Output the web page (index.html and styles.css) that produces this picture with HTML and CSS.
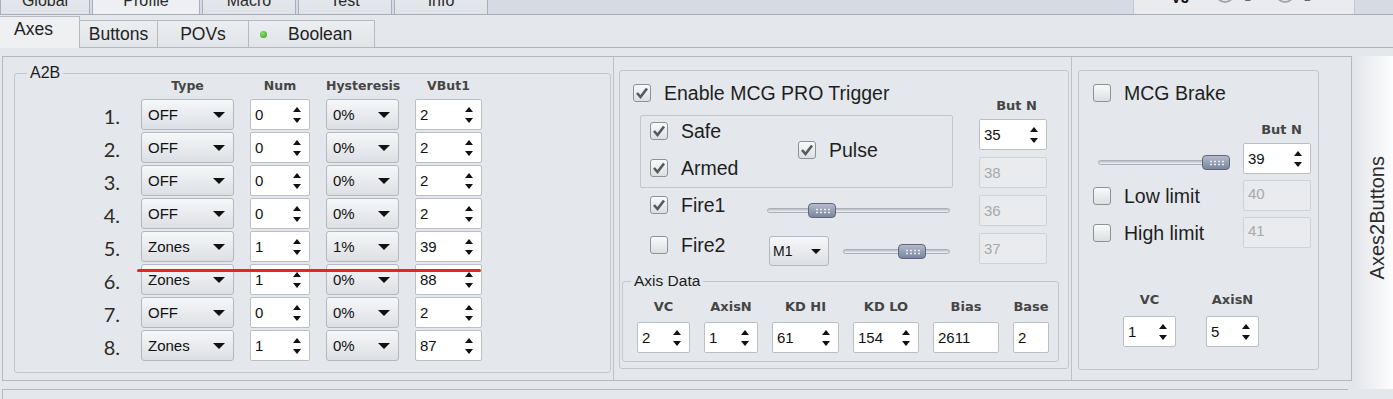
FILE: index.html
```html
<!DOCTYPE html>
<html>
    <head>
        <title>Profile - Axes</title>
        <link rel="stylesheet" href="styles.css">
    </head>
    <body>
        <div class="top-tabs">
            <div class="top-tab">Global</div>
            <div class="top-tab top-tab-active">Profile</div>
            <div class="top-tab">Macro</div>
            <div class="top-tab">Test</div>
            <div class="top-tab">Info</div>
            <div class="top-tools">
                <span class="tool-vj">VJ</span>
                <span class="tool-radio"></span><span class="tool-num">1</span>
                <span class="tool-radio"></span><span class="tool-num">2</span>
            </div>
        </div>

        <div class="sub-tabs">
            <div class="sub-tab sub-tab-active">Axes</div>
            <div class="sub-tab tab-buttons">Buttons</div>
            <div class="sub-tab tab-povs">POVs</div>
            <div class="sub-tab tab-boolean"><span class="led"></span>Boolean</div>
            <div class="sub-tabs-fill"></div>
        </div>

        <div class="workspace">
            <div class="work-main">
                <div class="content">

                    <div class="left-section">
                        <fieldset class="a2b">
                            <legend>A2B</legend>
                            <div class="a2b-grid">
                                <span></span>
                                <span class="head">Type</span>
                                <span class="head">Num</span>
                                <span class="head">Hysteresis</span>
                                <span class="head">VBut1</span>

                                <span class="row-num">1.</span>
                                <div class="combo">OFF</div>
                                <div class="spin">0<i class="ud"></i></div>
                                <div class="combo">0%</div>
                                <div class="spin">2<i class="ud"></i></div>

                                <span class="row-num">2.</span>
                                <div class="combo">OFF</div>
                                <div class="spin">0<i class="ud"></i></div>
                                <div class="combo">0%</div>
                                <div class="spin">2<i class="ud"></i></div>

                                <span class="row-num">3.</span>
                                <div class="combo">OFF</div>
                                <div class="spin">0<i class="ud"></i></div>
                                <div class="combo">0%</div>
                                <div class="spin">2<i class="ud"></i></div>

                                <span class="row-num">4.</span>
                                <div class="combo">OFF</div>
                                <div class="spin">0<i class="ud"></i></div>
                                <div class="combo">0%</div>
                                <div class="spin">2<i class="ud"></i></div>

                                <span class="row-num">5.</span>
                                <div class="combo">Zones</div>
                                <div class="spin">1<i class="ud"></i></div>
                                <div class="combo">1%</div>
                                <div class="spin">39<i class="ud"></i></div>

                                <span class="row-num">6.</span>
                                <div class="combo">Zones</div>
                                <div class="spin">1<i class="ud"></i></div>
                                <div class="combo">0%</div>
                                <div class="spin">88<i class="ud"></i></div>

                                <span class="row-num">7.</span>
                                <div class="combo">OFF</div>
                                <div class="spin">0<i class="ud"></i></div>
                                <div class="combo">0%</div>
                                <div class="spin">2<i class="ud"></i></div>

                                <span class="row-num">8.</span>
                                <div class="combo">Zones</div>
                                <div class="spin">1<i class="ud"></i></div>
                                <div class="combo">0%</div>
                                <div class="spin">87<i class="ud"></i></div>

                                <div class="red-mark"></div>
                            </div>
                        </fieldset>
                    </div>

                    <div class="mid-section">
                        <div class="trigger">
                            <div class="trig-top">
                                <div class="trig-left">
                                    <div class="check-row">
                                        <span class="box"><svg viewBox="0 0 16 16"><path d="M3 8 L6.5 12 L13 3.5"/></svg></span>
                                        Enable MCG PRO Trigger
                                    </div>

                                    <div class="inner-box">
                                        <div class="inner-left">
                                            <div class="check-row">
                                                <span class="box"><svg viewBox="0 0 16 16"><path d="M3 8 L6.5 12 L13 3.5"/></svg></span>
                                                Safe
                                            </div>
                                            <div class="check-row">
                                                <span class="box"><svg viewBox="0 0 16 16"><path d="M3 8 L6.5 12 L13 3.5"/></svg></span>
                                                Armed
                                            </div>
                                        </div>
                                        <div class="check-row pulse">
                                            <span class="box"><svg viewBox="0 0 16 16"><path d="M3 8 L6.5 12 L13 3.5"/></svg></span>
                                            Pulse
                                        </div>
                                    </div>

                                    <div class="fire-row">
                                        <div class="check-row fire-label">
                                            <span class="box"><svg viewBox="0 0 16 16"><path d="M3 8 L6.5 12 L13 3.5"/></svg></span>
                                            Fire1
                                        </div>
                                        <div class="slider fire1-slider">
                                            <div class="track"></div>
                                            <div class="thumb" style="left: 41px;"></div>
                                        </div>
                                    </div>

                                    <div class="fire-row fire2-row">
                                        <div class="check-row fire-label fire2-label">
                                            <span class="box"></span>
                                            Fire2
                                        </div>
                                        <div class="combo combo-small">M1</div>
                                        <div class="slider fire2-slider">
                                            <div class="track"></div>
                                            <div class="thumb" style="left: 55px;"></div>
                                        </div>
                                    </div>
                                </div>

                                <div class="trig-right">
                                    <span class="head but-head">But N</span>
                                    <div class="spin">35<i class="ud"></i></div>
                                    <div class="field off">38</div>
                                    <div class="field off">36</div>
                                    <div class="field off">37</div>
                                </div>
                            </div>

                            <fieldset class="axis-data">
                                <legend>Axis Data</legend>
                                <div class="axis-cols">
                                    <div class="axis-col">
                                        <span class="head">VC</span>
                                        <div class="spin w-vc">2<i class="ud"></i></div>
                                    </div>
                                    <div class="axis-col">
                                        <span class="head">AxisN</span>
                                        <div class="spin w-axisn">1<i class="ud"></i></div>
                                    </div>
                                    <div class="axis-col">
                                        <span class="head">KD HI</span>
                                        <div class="spin w-kd">61<i class="ud"></i></div>
                                    </div>
                                    <div class="axis-col">
                                        <span class="head">KD LO</span>
                                        <div class="spin w-kd2">154<i class="ud"></i></div>
                                    </div>
                                    <div class="axis-col">
                                        <span class="head">Bias</span>
                                        <div class="field w-bias">2611</div>
                                    </div>
                                    <div class="axis-col">
                                        <span class="head">Base</span>
                                        <div class="field w-base">2</div>
                                    </div>
                                </div>
                            </fieldset>
                        </div>
                    </div>

                    <div class="right-section">
                        <div class="brake">
                            <div class="check-row">
                                <span class="box"></span>
                                MCG Brake
                            </div>

                            <div class="brake-grid">
                                <span></span>
                                <span class="head but-head">But N</span>

                                <div class="slider brake-slider">
                                    <div class="track"></div>
                                    <div class="thumb" style="left: 104px;"></div>
                                </div>
                                <div class="spin">39<i class="ud"></i></div>

                                <div class="check-row">
                                    <span class="box"></span>
                                    Low limit
                                </div>
                                <div class="field off field-top">40</div>

                                <div class="check-row">
                                    <span class="box"></span>
                                    High limit
                                </div>
                                <div class="field off field-top">41</div>
                            </div>

                            <div class="brake-axis">
                                <div class="axis-col">
                                    <span class="head">VC</span>
                                    <div class="spin w-vc">1<i class="ud"></i></div>
                                </div>
                                <div class="axis-col">
                                    <span class="head">AxisN</span>
                                    <div class="spin w-vc">5<i class="ud"></i></div>
                                </div>
                            </div>
                        </div>
                    </div>

                </div>
                <div class="bottom-strip"></div>
            </div>
            <div class="side-tab"><span>Axes2Buttons</span></div>
        </div>
    </body>
</html>
```

FILE: styles.css
```css
body {
    margin: 0;
    width: 1393px;
    height: 399px;
    overflow: hidden;
    background-color: #e4e8ec;
    color: #1c1c1c;
    font-family: "Liberation Sans", Arial, sans-serif;
}

/* main tab strip, cut off at the top of the shot */
.top-tabs {
    display: flex;
    align-items: flex-end;
    height: 14px;
    overflow: hidden;
    background-color: #d6dbe3;
    border-bottom: 1px solid #a7adb8;
}

.top-tab {
    flex: none;
    width: 94px;
    height: 32px;
    margin-right: 2px;
    box-sizing: border-box;
    padding-top: 4px;
    display: flex;
    align-items: center;
    justify-content: center;
    border: 1px solid #a9afba;
    border-bottom: none;
    background: linear-gradient(#e9ecf0, #dfe3e8);
    font-size: 16px;
    color: #2a2a2a;
}

.top-tab:first-child {
    width: 90px;
}

.top-tab-active {
    width: 108px;
    background: #edeff2;
}

.top-tools {
    flex: none;
    margin-left: auto;
    margin-right: 38px;
    width: 222px;
    height: 32px;
    box-sizing: border-box;
    padding: 8px 0 0 37px;
    display: flex;
    align-items: flex-start;
    background-color: #e9ebee;
    border-left: 1px solid #c2c6cd;
    border-right: 1px solid #c2c6cd;
}

.tool-vj {
    font-size: 15px;
    font-weight: bold;
    line-height: 16px;
    color: #111;
    margin-right: 26px;
}

.tool-radio {
    width: 20px;
    height: 20px;
    margin-top: -7px;
    box-sizing: border-box;
    border: 2px solid #a2a6ad;
    border-radius: 50%;
}

.tool-num {
    font-size: 12px;
    line-height: 14px;
    color: #666;
    margin: 0 24px 0 9px;
}

/* second tab row */
.sub-tabs {
    display: flex;
    align-items: flex-end;
    height: 33px;
    background-color: #e4e7eb;
}

.sub-tab {
    flex: none;
    height: 28px;
    box-sizing: border-box;
    margin-left: -1px;
    display: flex;
    align-items: center;
    justify-content: center;
    border: 1px solid #b5bac2;
    background: linear-gradient(#eceef1, #e1e4e8);
    font-size: 17.5px;
    color: #222;
}

.sub-tab-active {
    margin-left: 0;
    width: 80px;
    height: 32px;
    padding: 0 12px 7px 0;
    border-left: none;
    border-bottom: none;
    background: #eef0f2;
}

.tab-buttons {
    width: 79px;
}

.tab-povs {
    width: 92px;
}

.tab-boolean {
    width: 127px;
    justify-content: flex-start;
    padding-left: 11px;
}

.led {
    width: 7px;
    height: 7px;
    border-radius: 50%;
    margin-right: 21px;
    background: radial-gradient(circle at 40% 35%, #8fe06a, #2f9e1c);
}

.sub-tabs-fill {
    flex: 1;
    border-bottom: 1px solid #aeb3bb;
}

/* work area */
.workspace {
    display: flex;
    margin-top: 8px;
}

.work-main {
    margin-left: 2px;
    width: 1350px;
}

.content {
    display: flex;
    height: 325px;
    box-sizing: border-box;
    border: 1px solid #b4b9c1;
}

.bottom-strip {
    margin: 8px 4px 0 0;
    height: 20px;
    border-top: 1px solid #b4b9c1;
    border-left: 1px solid #b4b9c1;
}

.side-tab {
    width: 41px;
    height: 333px;
    box-sizing: border-box;
    padding: 0 0 10px 10px;
    display: flex;
    align-items: center;
    justify-content: center;
    background: linear-gradient(to right, #e2e5e9, #fdfdfe);
}

.side-tab span {
    writing-mode: vertical-rl;
    transform: rotate(180deg);
    font-size: 20px;
    color: #2c2c2c;
}

.head {
    font-family: "DejaVu Sans", Verdana, sans-serif;
    font-size: 13px;
    font-weight: bold;
    line-height: 14px;
    color: #454545;
    text-align: center;
}

.but-head {
    text-align: right;
    padding-right: 9px;
}

/* widgets */
.combo {
    display: flex;
    align-items: center;
    height: 31px;
    box-sizing: border-box;
    padding-left: 6px;
    border: 1px solid #b3b8c0;
    border-radius: 3px;
    background: linear-gradient(#f6f7f9, #dcdfe4);
    font-size: 15px;
    color: #111;
}

.combo::after {
    content: "";
    margin: 0 8px 0 auto;
    border-left: 6px solid transparent;
    border-right: 6px solid transparent;
    border-top: 6px solid #111;
}

.combo-small {
    width: 60px;
    height: 30px;
    padding-left: 3px;
    font-size: 14px;
}

.combo-small::after {
    margin-right: 7px;
    border-left-width: 5px;
    border-right-width: 5px;
    border-top-width: 5px;
}

.spin,
.field {
    display: flex;
    align-items: center;
    height: 31px;
    box-sizing: border-box;
    padding-left: 4px;
    background-color: #fff;
    border: 1px solid #babec5;
    border-radius: 2px;
    font-size: 15px;
    color: #111;
}

.field.off {
    background-color: #e9ebee;
    border-color: #cfd3d8;
    color: #a6a9ad;
}

.field-top {
    align-items: flex-start;
    padding-top: 4px;
}

.ud {
    display: flex;
    flex-direction: column;
    gap: 6px;
    margin: 0 8px 0 auto;
}

.ud::before {
    content: "";
    border-left: 4px solid transparent;
    border-right: 4px solid transparent;
    border-bottom: 5px solid #111;
}

.ud::after {
    content: "";
    border-left: 4px solid transparent;
    border-right: 4px solid transparent;
    border-top: 5px solid #111;
}

.check-row {
    display: flex;
    align-items: center;
    gap: 13px;
    height: 18px;
    font-size: 19.5px;
    line-height: 20px;
    color: #1e1e1e;
    white-space: nowrap;
}

.box {
    flex: none;
    width: 18px;
    height: 18px;
    box-sizing: border-box;
    border: 1px solid #8d929a;
    border-radius: 3px;
    background: linear-gradient(#f9fafb, #dcdfe3);
}

.box svg {
    display: block;
    width: 16px;
    height: 16px;
}

.box path {
    fill: none;
    stroke: #55595e;
    stroke-width: 2.6;
}

.slider {
    position: relative;
    height: 15px;
}

.track {
    margin-top: 5px;
    height: 5px;
    box-sizing: border-box;
    border: 1px solid #aab0b8;
    border-radius: 3px;
    background: linear-gradient(#b8bcc3, #f1f2f4);
}

.thumb {
    position: absolute;
    top: 0;
    width: 28px;
    height: 15px;
    box-sizing: border-box;
    border: 1px solid #5e677a;
    border-radius: 4px;
    background: linear-gradient(#b3bbcc, #7b869c);
}

.thumb::after {
    content: "";
    position: absolute;
    top: 4px;
    left: 6px;
    width: 15px;
    height: 6px;
    background-image: radial-gradient(circle, #eef1f7 0.8px, transparent 1.2px);
    background-size: 4px 3px;
}

/* A2B */
.left-section {
    flex: none;
    width: 611px;
    box-sizing: border-box;
    padding: 10px 0 0 11px;
    border-right: 1px solid #bcc1c8;
}

.a2b,
.axis-data {
    margin: 0;
    padding: 0;
    box-sizing: border-box;
    border: 1px solid #c3c7cd;
    border-radius: 3px;
}

.a2b {
    width: 597px;
    height: 306px;
}

.a2b legend {
    margin-left: 12px;
    padding: 0 3px;
    font-size: 16px;
    line-height: 12px;
}

.a2b-grid {
    position: relative;
    display: grid;
    grid-template-columns: 110px 93px 60px 73px 67px;
    grid-template-rows: 18px repeat(8, 31px);
    column-gap: 16px;
    row-gap: 2px;
}

.a2b-grid .head {
    font-size: 12.5px;
}

.row-num {
    padding: 3px 5px 0 0;
    text-align: right;
    font-family: Lato, "Open Sans", sans-serif;
    font-size: 20px;
    line-height: 28px;
    color: #2e2a25;
}

.red-mark {
    position: absolute;
    left: 122px;
    top: 190px;
    width: 344px;
    height: 3px;
    border-radius: 2px;
    background-color: #e0262b;
}

/* trigger */
.mid-section {
    flex: none;
    width: 457px;
    box-sizing: border-box;
    padding: 13px 0 0 5px;
}

.trigger {
    width: 450px;
    height: 299px;
    box-sizing: border-box;
    padding: 13px 0 0 0;
    border: 1px solid #c3c7cd;
    border-radius: 3px;
}

.trig-top {
    display: flex;
    padding-left: 13px;
}

.trig-left {
    width: 322px;
}

.inner-box {
    display: flex;
    margin: 13px 0 0 7px;
    width: 313px;
    height: 73px;
    box-sizing: border-box;
    padding-left: 9px;
    border: 1px solid #c3c7cd;
    border-radius: 2px;
}

.inner-left {
    display: flex;
    flex-direction: column;
    gap: 19px;
    width: 148px;
    padding-top: 6px;
}

.pulse {
    align-self: center;
    margin-bottom: 4px;
}

.fire-row {
    display: flex;
    align-items: flex-start;
    margin-top: 8px;
    padding-left: 17px;
}

.fire2-row {
    margin-top: 18px;
}

.fire-label {
    width: 117px;
}

.fire2-label {
    width: 119px;
}

.fire1-slider {
    width: 183px;
    margin-top: 7px;
}

.fire2-slider {
    width: 107px;
    margin: 8px 0 0 14px;
}

.trig-right {
    display: flex;
    flex-direction: column;
    gap: 7px;
    width: 68px;
    margin-left: 24px;
}

.trig-right .but-head {
    margin: 15px 0 -1px 0;
    padding-right: 10px;
}

.axis-data {
    width: 437px;
    height: 89px;
    margin: 7px 0 0 2px;
}

.axis-data legend {
    margin-left: 8px;
    padding: 0 3px;
    font-size: 15.5px;
    line-height: 16px;
}

.axis-cols {
    display: flex;
    gap: 14px;
    padding: 11px 0 0 14px;
}

.axis-col {
    display: flex;
    flex-direction: column;
    gap: 8px;
}

.w-vc {
    width: 53px;
}

.w-axisn {
    width: 54px;
}

.w-kd {
    width: 67px;
}

.w-kd2 {
    width: 66px;
}

.w-bias {
    width: 66px;
}

.w-base {
    width: 36px;
}

/* brake */
.right-section {
    flex: 1;
    box-sizing: border-box;
    padding: 13px 0 0 6px;
    border-left: 1px solid #bcc1c8;
}

.brake {
    width: 241px;
    height: 300px;
    box-sizing: border-box;
    padding: 13px 0 0 14px;
    border: 1px solid #c3c7cd;
    border-radius: 3px;
}

.brake-grid {
    display: grid;
    grid-template-columns: 135px 68px;
    column-gap: 15px;
    row-gap: 6px;
    align-items: center;
    margin-top: 21px;
}

.brake-grid .field,
.brake-grid .spin {
    height: 31px;
}

.brake-slider {
    width: 130px;
    margin: 12px 0 0 5px;
    align-self: start;
}

.brake-axis {
    display: flex;
    gap: 30px;
    margin-top: 45px;
    padding-left: 30px;
}

.brake-axis .axis-col {
    gap: 9px;
}
```
